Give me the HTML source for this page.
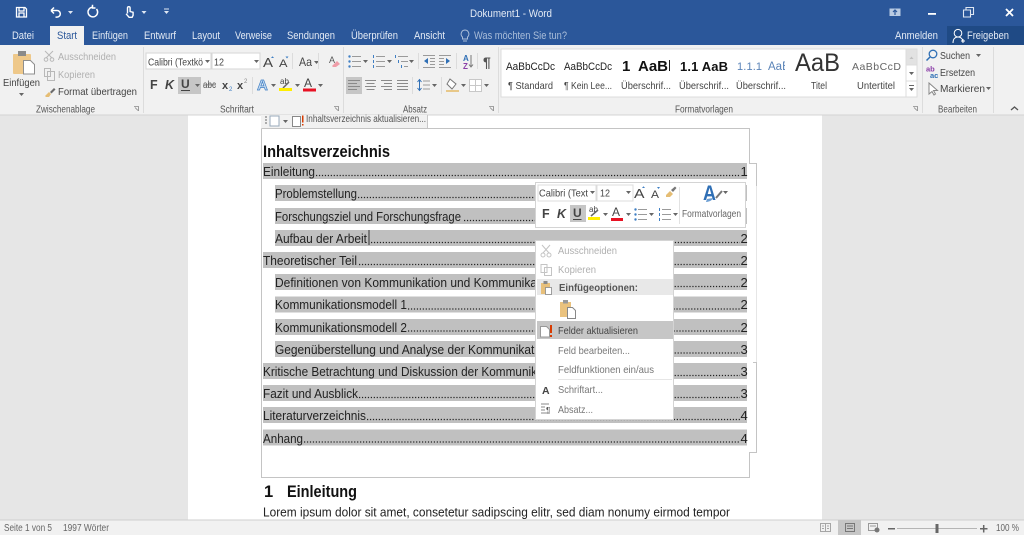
<!DOCTYPE html>
<html lang="de"><head><meta charset="utf-8"><title>Dokument1 - Word</title>
<style>
html,body{margin:0;padding:0;width:1024px;height:535px;overflow:hidden;background:#e6e6e6}
svg{display:block;filter:blur(.35px)}
text{font-family:"Liberation Sans",sans-serif;font-size:10.5px;fill:#444}
.w{fill:#fff}.t{fill:#e4ebf5;font-size:11px}.g{fill:#b0b0b0}.s{fill:#555;font-size:10px}
.d{fill:#222;font-size:13px}.h{font-weight:bold;font-size:16.5px;fill:#111}
.m{fill:#555}.l{fill:#555;font-size:10px}
</style></head><body>
<svg xmlns="http://www.w3.org/2000/svg" width="1024" height="535" viewBox="0 0 1024 535">
<defs>
<path id="a" d="M0 0h5l-2.5 3z" fill="#666"/>
<path id="aw" d="M0 0h5l-2.5 3z" fill="#dfe7f3"/>
<g id="list" fill="none" stroke="#9a9a9a"><path d="M4 1.5h9M4 6.5h9M4 11.5h9"/><circle cx="1.5" cy="1.5" r="1.2" fill="#3f7fc4" stroke="none"/><circle cx="1.5" cy="6.5" r="1.2" fill="#3f7fc4" stroke="none"/><circle cx="1.5" cy="11.5" r="1.2" fill="#3f7fc4" stroke="none"/></g>
<g id="num" fill="none" stroke="#9a9a9a"><path d="M4 1.5h9M4 6.5h9M4 11.5h9"/><path d="M1.5 0v3M1.5 5v3M1.5 10v3" stroke="#3f7fc4"/></g>
<clipPath id="c1"><rect x="615" y="50" width="55" height="30"/></clipPath>
<clipPath id="c2"><rect x="730" y="50" width="55" height="30"/></clipPath>
</defs>

<!-- Backgrounds -->
<rect width="1024" height="45" fill="#2b579a"/>
<rect y="45" width="1024" height="70" fill="#f1f1f1"/>
<rect y="115" width="1024" height="405" fill="#e6e6e6"/>
<rect x="188" y="115" width="634" height="405" fill="#fff"/>
<rect y="114.500" width="1024" height="1" fill="#d4d4d4"/>

<!-- QAT -->
<g fill="none" stroke="#fff" stroke-width="1.300">
<path d="M16.500 7.500h8.500l1.500 1.500v8h-10z"/><path d="M19 7.500v3.500h5V7.500M19 17v-4h5v4"/>
<path d="M51 10.500h6a3.300 3.300 0 0 1 0 6.600h-1.500M51 10.500l3-3M51 10.500l3 3" stroke-width="1.500"/>
<path d="M96.500 9a4.800 4.800 0 1 1-3.800-1.700M92.500 4.800v3.200h3" stroke-width="1.500"/>
<path d="M127.500 13.500v-5.500a1.300 1.300 0 0 1 2.600 0v3.500l3 .8v3l-1 2h-3l-3-3.500" stroke-width="1.400"/>
</g>
<use href="#aw" x="68" y="11"/><use href="#aw" x="141.500" y="11"/><use href="#aw" x="164" y="11"/>
<rect x="164" y="8.500" width="5" height="1" fill="#dfe7f3"/>

<text x="470" y="17" class="t" textLength="82" lengthAdjust="spacingAndGlyphs">Dokument1 - Word</text>

<!-- Window controls -->
<rect x="889.500" y="8.500" width="11" height="7.500" fill="#b9cbe3"/><path d="M895 15v-5M893 12l2-2 2 2" stroke="#2b579a" stroke-width="1.200" fill="none"/>
<rect x="928" y="13" width="8" height="1.800" fill="#fff"/>
<path d="M963.500 10h7v7h-7zM966 10V7.500h7.500v7H971" fill="none" stroke="#dfe7f3" stroke-width="1.100"/>
<path d="M1006 9l7 7M1013 9l-7 7" stroke="#fff" stroke-width="1.800"/>

<!-- Tabs -->
<rect x="50" y="26" width="34" height="19" fill="#f1f1f1"/>
<text x="12" y="39" class="t" textLength="22" lengthAdjust="spacingAndGlyphs">Datei</text>
<text x="57" y="39" style="fill:#2b579a;font-size:11px" textLength="20" lengthAdjust="spacingAndGlyphs">Start</text>
<text x="92" y="39" class="t" textLength="36" lengthAdjust="spacingAndGlyphs">Einfügen</text>
<text x="144" y="39" class="t" textLength="32" lengthAdjust="spacingAndGlyphs">Entwurf</text>
<text x="192" y="39" class="t" textLength="28" lengthAdjust="spacingAndGlyphs">Layout</text>
<text x="235" y="39" class="t" textLength="37" lengthAdjust="spacingAndGlyphs">Verweise</text>
<text x="287" y="39" class="t" textLength="48" lengthAdjust="spacingAndGlyphs">Sendungen</text>
<text x="351" y="39" class="t" textLength="47" lengthAdjust="spacingAndGlyphs">Überprüfen</text>
<text x="414" y="39" class="t" textLength="31" lengthAdjust="spacingAndGlyphs">Ansicht</text>
<path d="M465 30a4 4 0 0 1 2.500 7v2h-5v-2a4 4 0 0 1 2.500-7zM463 41h4" fill="none" stroke="#a9bdd9"/>
<text x="474" y="39" style="fill:#a9bdd9;font-size:11px" textLength="93" lengthAdjust="spacingAndGlyphs">Was möchten Sie tun?</text>
<text x="895" y="39" class="t" textLength="43" lengthAdjust="spacingAndGlyphs">Anmelden</text>
<rect x="947" y="26" width="77" height="19" fill="#1f4a85"/>
<path d="M953 43c0-4 2-6 5-6s5 2 5 6M958 37a3.800 3.800 0 1 0 0-7.600 3.800 3.800 0 0 0 0 7.600zM961 41h4M963 39v4" fill="none" stroke="#fff"/>
<text x="967" y="39" class="t" textLength="42" lengthAdjust="spacingAndGlyphs">Freigeben</text>

<!-- Group separators -->
<g fill="#dcdcdc"><rect x="143" y="47" width="1" height="66"/><rect x="343" y="47" width="1" height="66"/><rect x="498" y="47" width="1" height="66"/><rect x="922" y="47" width="1" height="66"/><rect x="993" y="47" width="1" height="66"/></g>

<!-- Clipboard -->
<rect x="13" y="54" width="18" height="20" rx="1" fill="#eec88a"/>
<rect x="18" y="51" width="8" height="5" fill="#8a8a8a"/>
<path d="M23.500 60.500h7l4 4v9.500h-11z" fill="#fff" stroke="#8f8f8f"/>
<text x="3" y="86" textLength="37" lengthAdjust="spacingAndGlyphs">Einfügen</text>
<use href="#a" x="19" y="93"/>
<g fill="none" stroke="#b8b8b8"><path d="M45 51l7 7M53 51l-7 7"/><circle cx="46" cy="59.500" r="1.800"/><circle cx="52" cy="59.500" r="1.800"/>
<path d="M44.500 68.500h6v8h-6zM47.500 71.500h7v9h-7z" fill="#f1f1f1"/></g>
<path d="M50 92l4-4 1.500 1.500-4 4z" fill="#6b6b6b"/><path d="M45 96l4-4 2 2-2 3h-3z" fill="#e5bd74"/>
<text x="58" y="60" class="g" textLength="58" lengthAdjust="spacingAndGlyphs">Ausschneiden</text>
<text x="58" y="78" class="g" textLength="37" lengthAdjust="spacingAndGlyphs">Kopieren</text>
<text x="58" y="95" textLength="79" lengthAdjust="spacingAndGlyphs">Format übertragen</text>
<text x="36" y="112.500" class="l" textLength="59" lengthAdjust="spacingAndGlyphs">Zwischenablage</text>
<path d="M134 106.500h4.500v4.500M135 107.500l3 3" fill="none" stroke="#888" stroke-width=".8"/>

<!-- Font group -->
<rect x="146" y="53" width="65" height="16" fill="#fff" stroke="#d6d6d6"/>
<rect x="212" y="53" width="48" height="16" fill="#fff" stroke="#d6d6d6"/>
<text x="148" y="65.500" textLength="55" lengthAdjust="spacingAndGlyphs">Calibri (Textkö</text>
<use href="#a" x="205" y="60"/>
<text x="214" y="65.500" textLength="10" lengthAdjust="spacingAndGlyphs">12</text>
<use href="#a" x="254" y="60"/>
<text x="263" y="67" style="font-size:13px" textLength="10" lengthAdjust="spacingAndGlyphs">A</text><path d="M271 58l1.500-1.800L274 58z" fill="#3f7fc4"/>
<text x="279" y="67" style="font-size:11px" textLength="8.500" lengthAdjust="spacingAndGlyphs">A</text><path d="M285.500 56.500h3l-1.500 2z" fill="#3f7fc4"/>
<rect x="292" y="53" width="1" height="16" fill="#dcdcdc"/>
<text x="299" y="66" style="font-size:12px" textLength="13" lengthAdjust="spacingAndGlyphs">Aa</text><use href="#a" x="314" y="61"/>
<rect x="318" y="53" width="1" height="16" fill="#dcdcdc"/>
<text x="329" y="63" style="font-size:9px;fill:#555" textLength="6">A</text><path d="M332 66l5-5 3 3-4 3h-3z" fill="#ef9da8"/>

<text x="150" y="89" style="font-weight:bold;font-size:12.500px">F</text>
<text x="165" y="89" style="font-weight:bold;font-style:italic;font-size:12.500px">K</text>
<rect x="178" y="77" width="23" height="17" fill="#c6c6c6"/>
<text x="181" y="88" style="font-weight:bold;font-size:12px">U</text><rect x="181" y="90" width="9" height="1" fill="#444"/>
<use href="#a" x="195" y="84"/>
<text x="203" y="88" class="m" textLength="13" lengthAdjust="spacingAndGlyphs">abc</text><rect x="203" y="84.500" width="13" height=".8" fill="#666"/>
<text x="222" y="89" style="font-size:11px;font-weight:bold" textLength="7">x</text><text x="229" y="91" style="font-size:6px;fill:#3f7fc4">2</text>
<text x="237" y="89" style="font-size:11px;font-weight:bold" textLength="7">x</text><text x="244" y="83" style="font-size:6px;fill:#888">2</text>
<rect x="252" y="77" width="1" height="17" fill="#dcdcdc"/>
<text x="257" y="90" style="font-size:15px;font-weight:bold;fill:#c7dcf2;stroke:#3f7fc4;stroke-width:.7" textLength="12">A</text><use href="#a" x="271" y="84"/>
<text x="280" y="84" style="font-size:8px" textLength="9">ab</text><path d="M283 88l6-6" stroke="#666" stroke-width="1.500"/><rect x="279" y="88" width="13" height="3" fill="#ffee00"/><use href="#a" x="295" y="84"/>
<text x="304" y="87" style="font-size:12px" textLength="10">A</text><rect x="303" y="88.500" width="13" height="3" fill="#e81123"/><use href="#a" x="318" y="84"/>
<text x="220" y="112.500" class="l" textLength="34" lengthAdjust="spacingAndGlyphs">Schriftart</text>
<path d="M334 106.500h4.500v4.500M335 107.500l3 3" fill="none" stroke="#888" stroke-width=".8"/>

<!-- Paragraph group -->
<use href="#list" x="348" y="55"/><use href="#a" x="363" y="60"/>
<use href="#num" x="372" y="55"/><use href="#a" x="387" y="60"/>
<g fill="none" stroke="#9a9a9a"><path d="M398 56.500h10M401 61.500h7M404 66.500h4"/><path d="M395.500 55v3M398.500 60v3M401.500 65v3" stroke="#3f7fc4"/></g><use href="#a" x="409" y="60"/>
<rect x="418" y="53" width="1" height="16" fill="#dcdcdc"/>
<g stroke="#9a9a9a"><path d="M423 55.500h12M430 58.500h5M430 61.500h5M430 64.500h5M423 67.500h12M439 55.500h12M439 58.500h5M439 61.500h5M439 64.500h5M439 67.500h12"/></g>
<path d="M428 58v6l-4-3zM446 58v6l4-3z" fill="#2f6fb5"/>
<rect x="456" y="53" width="1" height="16" fill="#dcdcdc"/>
<text x="463" y="61" style="font-size:8px;fill:#2f6fb5;font-weight:bold">A</text><text x="463" y="69" style="font-size:8px;fill:#8b3fa8;font-weight:bold">Z</text><path d="M471 55v12M469 64.500l2 2.500 2-2.500" stroke="#777" fill="none"/>
<rect x="477" y="53" width="1" height="16" fill="#dcdcdc"/>
<text x="483" y="67" style="font-size:14px;font-weight:bold;fill:#555" textLength="9">¶</text>

<rect x="346" y="77" width="16" height="17" fill="#c6c6c6"/>
<g stroke="#8a8a8a"><path d="M348 80.500h12M348 83.500h9M348 86.500h12M348 89.500h9M365 80.500h11M366.500 83.500h8M365 86.500h11M366.500 89.500h8M381 80.500h11M384 83.500h8M381 86.500h11M384 89.500h8M397 80.500h11M397 83.500h11M397 86.500h11M397 89.500h11"/></g>
<rect x="412" y="77" width="1" height="17" fill="#dcdcdc"/>
<path d="M419.500 80v10M417.500 82l2-2.500 2 2.500M417.500 88l2 2.500 2-2.500" stroke="#2f6fb5" fill="none"/>
<path d="M423 81h7M423 85h7M423 89h7" stroke="#9a9a9a"/><use href="#a" x="432" y="84"/>
<rect x="441" y="77" width="1" height="17" fill="#dcdcdc"/>
<path d="M450 79l6 5-4 5-5-5z" fill="#fff" stroke="#777"/><rect x="446" y="90" width="13" height="2" fill="#e8c889"/><use href="#a" x="461" y="84"/>
<path d="M469.500 79.500h12v12h-12zM475.500 79.500v12M469.500 85.500h12" fill="#fff" stroke="#c8c8c8"/><use href="#a" x="484" y="84"/>
<text x="403" y="112.500" class="l" textLength="24" lengthAdjust="spacingAndGlyphs">Absatz</text>
<path d="M489 106.500h4.500v4.500M490 107.500l3 3" fill="none" stroke="#888" stroke-width=".8"/>

<!-- Style gallery -->
<rect x="501" y="49" width="405" height="48" fill="#fff" stroke="#dcdcdc"/>
<rect x="906" y="49" width="11" height="16" fill="#e2e2e2" stroke="#dcdcdc"/>
<rect x="906" y="65" width="11" height="16" fill="#fff" stroke="#dcdcdc"/>
<rect x="906" y="81" width="11" height="16" fill="#fff" stroke="#dcdcdc"/>
<path d="M909.500 59l2-2.500 2 2.500z" fill="#c0c0c0"/><use href="#a" x="909" y="72"/><path d="M909 85.500h5" stroke="#666"/><use href="#a" x="909" y="88"/>
<text x="506" y="70" style="font-size:11px;fill:#222" textLength="49" lengthAdjust="spacingAndGlyphs">AaBbCcDc</text>
<text x="564" y="70" style="font-size:11px;fill:#222" textLength="48" lengthAdjust="spacingAndGlyphs">AaBbCcDc</text>
<g clip-path="url(#c1)"><text x="622" y="71" style="font-size:15px;font-weight:bold;fill:#111">1</text><text x="638" y="71" style="font-size:15px;font-weight:bold;fill:#111">AaBb</text></g>
<text x="680" y="71" style="font-size:13px;font-weight:bold;fill:#111" textLength="48" lengthAdjust="spacing">1.1 AaB</text>
<g clip-path="url(#c2)"><text x="737" y="70" style="font-size:11px;fill:#5b84b8" textLength="25" lengthAdjust="spacing">1.1.1</text><text x="768" y="70" style="font-size:11.500px;fill:#5b84b8">AaBb</text></g>
<text x="795" y="71" style="font-size:25px;fill:#333" textLength="45" lengthAdjust="spacingAndGlyphs">AaB</text>
<text x="852" y="70" style="font-size:10.500px;fill:#666" textLength="49" lengthAdjust="spacing">AaBbCcD</text>
<text x="508" y="89" textLength="45" lengthAdjust="spacingAndGlyphs">¶ Standard</text>
<text x="564" y="89" textLength="48" lengthAdjust="spacingAndGlyphs">¶ Kein Lee...</text>
<text x="621" y="89" textLength="50" lengthAdjust="spacingAndGlyphs">Überschrif...</text>
<text x="679" y="89" textLength="50" lengthAdjust="spacingAndGlyphs">Überschrif...</text>
<text x="736" y="89" textLength="50" lengthAdjust="spacingAndGlyphs">Überschrif...</text>
<text x="811" y="89" textLength="16" lengthAdjust="spacingAndGlyphs">Titel</text>
<text x="857" y="89" textLength="38" lengthAdjust="spacingAndGlyphs">Untertitel</text>
<text x="675" y="112.500" class="l" textLength="58" lengthAdjust="spacingAndGlyphs">Formatvorlagen</text>
<path d="M913 106.500h4.500v4.500M914 107.500l3 3" fill="none" stroke="#888" stroke-width=".8"/>

<!-- Edit group -->
<circle cx="933" cy="54" r="3.800" fill="none" stroke="#2f6fb5" stroke-width="1.300"/><path d="M930 57l-3.500 3.500" stroke="#2f6fb5" stroke-width="1.500"/>
<text x="940" y="59" textLength="30" lengthAdjust="spacingAndGlyphs">Suchen</text><use href="#a" x="976" y="54"/>
<text x="926" y="71.500" style="font-size:7.500px;fill:#8b3fa8;font-weight:bold">ab</text><text x="930" y="78" style="font-size:7.500px;fill:#2f6fb5;font-weight:bold">ac</text>
<text x="940" y="76" textLength="35" lengthAdjust="spacingAndGlyphs">Ersetzen</text>
<path d="M929 83v11l3-2.500 2 3.500 1.500-1-2-3.500h4z" fill="#fff" stroke="#888"/>
<text x="940" y="92" textLength="45" lengthAdjust="spacingAndGlyphs">Markieren</text><use href="#a" x="986" y="87"/>
<text x="938" y="112.500" class="l" textLength="39" lengthAdjust="spacingAndGlyphs">Bearbeiten</text>
<path d="M1011 110l3.500-3 3.500 3" fill="none" stroke="#555" stroke-width="1.300"/>

<!-- TOC frame -->
<path d="M261.500 128.500H749.500V163.500H756.500V186" fill="none" stroke="#c4c4c4"/>
<path d="M756.500 186V362" fill="none" stroke="#e6e6e6"/>
<path d="M753 362.500H756.500V452.500H749.500V477.500H261.500V128.500" fill="none" stroke="#c4c4c4"/>

<!-- Field tab -->
<rect x="261" y="115" width="167" height="13" fill="#f1f1f1"/>
<path d="M427.500 115v13" stroke="#c8c8c8"/>
<path d="M265 117h2M265 120h2M265 123h2" stroke="#666"/>
<rect x="270" y="116" width="9" height="10" fill="#fff" stroke="#9ab"/>
<use href="#a" x="283" y="120"/>
<rect x="292.500" y="116.500" width="8" height="10" fill="#fff" stroke="#888"/><rect x="302" y="115.500" width="1.500" height="7" fill="#d83b01"/><rect x="302" y="124" width="1.500" height="1.500" fill="#d83b01"/>
<text x="306" y="122" class="s" textLength="120" lengthAdjust="spacingAndGlyphs">Inhaltsverzeichnis aktualisieren...</text>

<!-- Heading -->
<text x="263" y="157" class="h" textLength="127" lengthAdjust="spacingAndGlyphs">Inhaltsverzeichnis</text>

<!-- TOC bands -->
<g fill="#c0c0c0">
<rect x="263" y="163" width="484" height="16"/>
<rect x="275" y="185" width="472" height="16"/>
<rect x="275" y="208" width="472" height="16"/>
<rect x="275" y="230" width="472" height="16"/>
<rect x="263" y="252" width="484" height="16"/>
<rect x="275" y="274" width="472" height="16"/>
<rect x="275" y="296.500" width="472" height="16"/>
<rect x="275" y="319" width="472" height="16"/>
<rect x="275" y="341" width="472" height="16"/>
<rect x="263" y="363" width="484" height="16"/>
<rect x="263" y="385" width="484" height="16"/>
<rect x="263" y="407" width="484" height="16"/>
<rect x="263" y="429.500" width="484" height="16"/>
</g>

<!-- Leaders -->
<g stroke="#222" stroke-width="1.200" stroke-dasharray="1.200 1.750" fill="none">
<path d="M316 175.500H740M358 197.500H740M464 220.500H740M371 242.500H740M359 264.500H740M536 286.500H740M408 309H740M408 331H740M536 353H740M536 375.500H740M359 397.500H740M367 419.500H740M304 442H740"/>
</g>

<g class="toc">
<text x="263" y="176" class="d" textLength="52" lengthAdjust="spacingAndGlyphs">Einleitung</text>
<text x="275" y="198" class="d" textLength="82" lengthAdjust="spacingAndGlyphs">Problemstellung</text>
<text x="275" y="221" class="d" textLength="186" lengthAdjust="spacingAndGlyphs">Forschungsziel und Forschungsfrage</text>
<text x="275" y="243" class="d" textLength="92" lengthAdjust="spacingAndGlyphs">Aufbau der Arbeit</text>
<text x="263" y="265" class="d" textLength="94" lengthAdjust="spacingAndGlyphs">Theoretischer Teil</text>
<text x="275" y="287" class="d" textLength="262" lengthAdjust="spacingAndGlyphs">Definitionen von Kommunikation und Kommunika</text>
<text x="275" y="309" class="d" textLength="132" lengthAdjust="spacingAndGlyphs">Kommunikationsmodell 1</text>
<text x="275" y="332" class="d" textLength="132" lengthAdjust="spacingAndGlyphs">Kommunikationsmodell 2</text>
<text x="275" y="354" class="d" textLength="262" lengthAdjust="spacingAndGlyphs">Gegenüberstellung und Analyse der Kommunikati</text>
<text x="263" y="376" class="d" textLength="274" lengthAdjust="spacingAndGlyphs">Kritische Betrachtung und Diskussion der Kommunik</text>
<text x="263" y="398" class="d" textLength="95" lengthAdjust="spacingAndGlyphs">Fazit und Ausblick</text>
<text x="263" y="420" class="d" textLength="103" lengthAdjust="spacingAndGlyphs">Literaturverzeichnis</text>
<text x="263" y="443" class="d" textLength="40" lengthAdjust="spacingAndGlyphs">Anhang</text>
<text x="740.500" y="176" class="d">1</text><text x="740.500" y="243" class="d">2</text><text x="740.500" y="265" class="d">2</text><text x="740.500" y="287" class="d">2</text><text x="740.500" y="309" class="d">2</text><text x="740.500" y="332" class="d">2</text><text x="740.500" y="354" class="d">3</text><text x="740.500" y="376" class="d">3</text><text x="740.500" y="398" class="d">3</text><text x="740.500" y="420" class="d">4</text><text x="740.500" y="443" class="d">4</text>
</g>
<rect x="368.500" y="230" width="1" height="15" fill="#333"/>

<!-- Body -->
<text x="264" y="497" class="h">1</text>
<text x="287" y="497" class="h" textLength="70" lengthAdjust="spacingAndGlyphs">Einleitung</text>
<text x="263" y="516.500" class="d" textLength="467" lengthAdjust="spacingAndGlyphs">Lorem ipsum dolor sit amet, consetetur sadipscing elitr, sed diam nonumy eirmod tempor</text>

<!-- Mini toolbar -->
<rect x="535.500" y="182.500" width="210" height="45" fill="#fff" stroke="#d4d4d4"/>
<rect x="538" y="185" width="58" height="16" fill="#fff" stroke="#dcdcdc"/>
<rect x="597" y="185" width="36" height="16" fill="#fff" stroke="#dcdcdc"/>
<text x="539" y="196.500" textLength="49" lengthAdjust="spacingAndGlyphs">Calibri (Text</text><use href="#a" x="590" y="191"/>
<text x="600" y="196.500" textLength="10" lengthAdjust="spacingAndGlyphs">12</text><use href="#a" x="626" y="191"/>
<text x="634" y="198" style="font-size:13px" textLength="10.500" lengthAdjust="spacingAndGlyphs">A</text><path d="M642 188l1.500-1.800L645 188z" fill="#3f7fc4"/>
<text x="651" y="198" style="font-size:11px" textLength="8" lengthAdjust="spacingAndGlyphs">A</text><path d="M657 187h3l-1.500 2z" fill="#3f7fc4"/>
<path d="M666 195l4-4 3 3-3 3h-4z" fill="#e5bd74"/><path d="M671 190l4-3.500 1.500 1.500-3.500 4z" fill="#777"/>
<text x="542" y="218" style="font-weight:bold;font-size:12.500px">F</text>
<text x="557" y="218" style="font-weight:bold;font-style:italic;font-size:12.500px">K</text>
<rect x="570" y="205" width="16" height="17" fill="#c6c6c6"/>
<text x="573" y="217" style="font-weight:bold;font-size:12px">U</text><rect x="573" y="219" width="8.500" height="1" fill="#444"/>
<text x="589" y="212" style="font-size:8px" textLength="9">ab</text><path d="M591 216l7-6" stroke="#666" stroke-width="1.500"/><rect x="588" y="217" width="12" height="3" fill="#ffee00"/><use href="#a" x="603" y="213"/>
<text x="612" y="216" style="font-size:12px" textLength="10">A</text><rect x="611" y="218" width="12" height="3" fill="#e81123"/><use href="#a" x="626" y="213"/>
<use href="#list" x="634" y="208"/><use href="#a" x="649" y="213"/>
<use href="#num" x="658" y="208"/><use href="#a" x="673" y="213"/>
<rect x="679" y="187" width="1" height="37" fill="#e2e2e2"/>
<text x="703" y="200" style="font-size:21px;font-weight:bold;fill:#2f6fb5" textLength="13" lengthAdjust="spacingAndGlyphs">A</text>
<path d="M716 198l6-7" stroke="#777" stroke-width="2"/><path d="M706 202c2 0 6-1 7-4l-6 1z" fill="#6fa0d4"/><use href="#a" x="723" y="191"/>
<text x="682" y="217" style="fill:#666;font-size:10px" textLength="59" lengthAdjust="spacingAndGlyphs">Formatvorlagen</text>

<!-- Context menu -->
<rect x="535.500" y="240.500" width="138" height="179" fill="#fff" stroke="#d4d4d4"/>
<g fill="none" stroke="#c4c4c4"><path d="M542 245l7 8M550 245l-7 8"/><circle cx="543" cy="255" r="2"/><circle cx="549" cy="255" r="2"/><path d="M541 264.500h6v8h-6zM544.500 267.500h7v8h-7z" fill="#fff"/></g>
<text x="558" y="254" class="g" textLength="59" lengthAdjust="spacingAndGlyphs">Ausschneiden</text>
<text x="558" y="273" class="g" textLength="38" lengthAdjust="spacingAndGlyphs">Kopieren</text>
<rect x="537" y="279" width="136" height="16" fill="#e8e8e8"/>
<rect x="541" y="283" width="9" height="11" fill="#e8c07a"/><rect x="543.500" y="281" width="4" height="3" fill="#888"/><rect x="545.500" y="287.500" width="6" height="7" fill="#fff" stroke="#888" stroke-width=".8"/>
<text x="559" y="291" style="font-weight:bold;fill:#555" textLength="79" lengthAdjust="spacingAndGlyphs">Einfügeoptionen:</text>
<rect x="560" y="302" width="11" height="15" fill="#eac27e"/><rect x="563" y="300" width="5" height="3.500" fill="#999"/><path d="M567.500 307.500h5l3 3v8h-8z" fill="#fff" stroke="#888"/>
<rect x="537" y="321" width="136" height="18" fill="#c6c6c6"/>
<path d="M540.500 326.500h6l3 3v7.500h-9z" fill="#fff" stroke="#999"/><rect x="550" y="325" width="2" height="8" fill="#d83b01"/><rect x="550" y="335" width="2" height="2" fill="#d83b01"/>
<text x="558" y="334" style="fill:#444" textLength="80" lengthAdjust="spacingAndGlyphs">Felder aktualisieren</text>
<text x="558" y="354" style="fill:#777" textLength="72" lengthAdjust="spacingAndGlyphs">Feld bearbeiten...</text>
<text x="558" y="373" style="fill:#777" textLength="96" lengthAdjust="spacingAndGlyphs">Feldfunktionen ein/aus</text>
<rect x="558" y="379" width="114" height="1" fill="#e6e6e6"/>
<text x="542" y="394" style="font-weight:bold;font-size:10.500px">A</text>
<text x="558" y="393" style="fill:#777" textLength="45" lengthAdjust="spacingAndGlyphs">Schriftart...</text>
<path d="M541 404h8M541 407h4M541 410h4M541 413h8" stroke="#888"/><text x="546" y="413" style="font-size:8px;fill:#555">¶</text>
<text x="558" y="413" style="fill:#777" textLength="35" lengthAdjust="spacingAndGlyphs">Absatz...</text>

<!-- Status bar -->
<rect y="520" width="1024" height="15" fill="#f1f1f1"/>
<rect y="519.500" width="1024" height="1" fill="#cfcfcf"/>
<text x="4" y="531" style="fill:#666;font-size:10px" textLength="48" lengthAdjust="spacingAndGlyphs">Seite 1 von 5</text>
<text x="63" y="531" style="fill:#666;font-size:10px" textLength="46" lengthAdjust="spacingAndGlyphs">1997 Wörter</text>
<path d="M820.500 523.500h10v8h-10zM825.500 523.500v8M822 526h2M822 528.500h2M827 526h2M827 528.500h2" fill="none" stroke="#a5a5a5"/>
<rect x="838" y="520" width="23" height="15" fill="#c6c6c6"/>
<path d="M845.500 523.500h9v8h-9zM847 526h6M847 528.500h6" fill="none" stroke="#777"/>
<path d="M868.500 523.500h9v7h-9zM870 526h6" fill="none" stroke="#999"/><circle cx="877" cy="530" r="2.500" fill="#777"/>
<rect x="888" y="528" width="7" height="1.500" fill="#666"/>
<rect x="897" y="528" width="80" height="1" fill="#b5b5b5"/>
<rect x="935.500" y="524" width="3" height="9" fill="#666"/>
<path d="M980 528.700h7.500M983.700 525v7.500" stroke="#666" stroke-width="1.500"/>
<text x="996" y="531" style="fill:#666;font-size:10px" textLength="23" lengthAdjust="spacingAndGlyphs">100 %</text>
</svg>
</body></html>
